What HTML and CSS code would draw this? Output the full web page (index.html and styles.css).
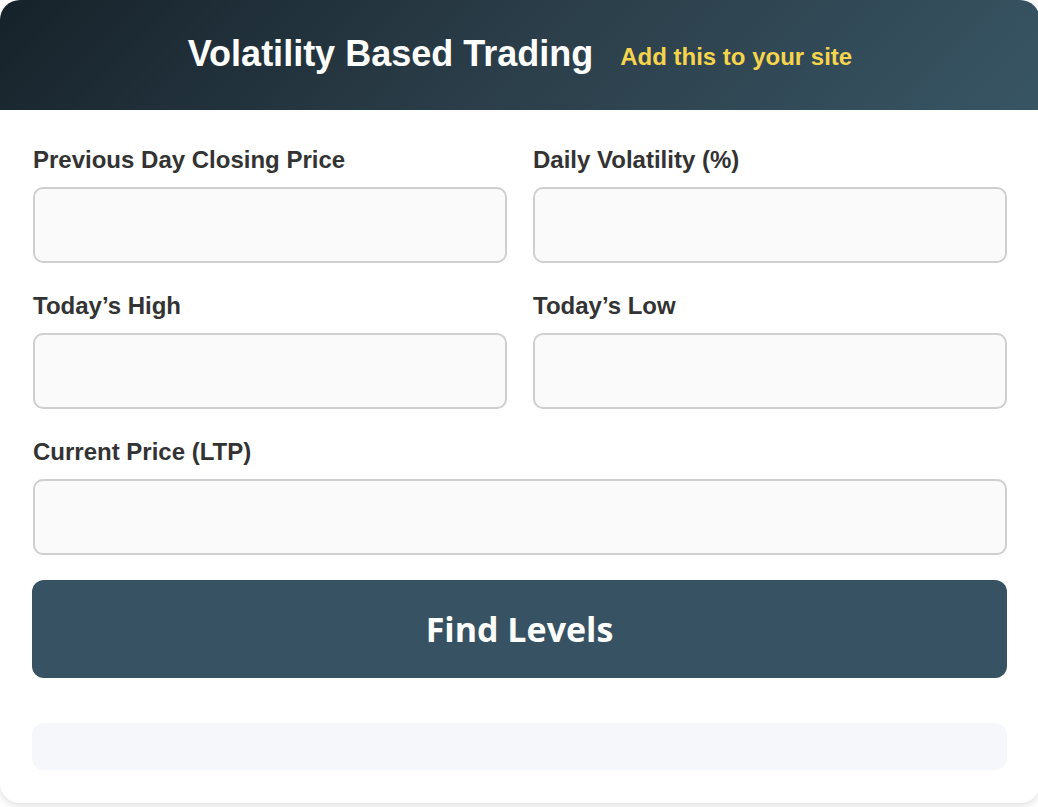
FILE: index.html
```html
<!DOCTYPE html>
<html lang="en">
<head>
<meta charset="utf-8">
<title>Volatility Based Trading</title>
<link rel="stylesheet" href="styles.css">
</head>
<body>
<div class="card">
  <header class="card-head">
    <h1 class="title">Volatility Based Trading</h1>
    <a class="embed-link" href="#">Add this to your site</a>
  </header>
  <div class="card-body">
    <div class="grid">
      <div class="field">
        <label class="label">Previous Day Closing Price</label>
        <input class="input" type="text">
      </div>
      <div class="field">
        <label class="label">Daily Volatility (%)</label>
        <input class="input" type="text">
      </div>
      <div class="field">
        <label class="label">Today’s High</label>
        <input class="input" type="text">
      </div>
      <div class="field">
        <label class="label">Today’s Low</label>
        <input class="input" type="text">
      </div>
      <div class="field full">
        <label class="label">Current Price (LTP)</label>
        <input class="input" type="text">
      </div>
    </div>
    <button class="btn" type="button">Find Levels</button>
    <div class="result"></div>
  </div>
</div>
</body>
</html>
```

FILE: styles.css
```css
* { box-sizing: border-box; }
html, body { margin: 0; padding: 0; }
body {
  background: #ffffff;
  font-family: "Liberation Sans", Arial, sans-serif;
  width: 1038px;
  height: 807px;
  overflow: hidden;
}
.card {
  width: 1040px;
  height: 803px;
  background: #ffffff;
  border-radius: 20px;
  box-shadow: 0 3px 8px rgba(0, 0, 0, 0.12);
  overflow: hidden;
}
.card-head {
  height: 110px;
  background: linear-gradient(135deg, #16222a 0%, #2b3e49 50%, #385564 100%);
  display: flex;
  align-items: center;
  justify-content: center;
  gap: 27px;
  padding-bottom: 2px;
}
.title {
  margin: 0;
  color: #ffffff;
  font-size: 36px;
  font-weight: 700;
  line-height: 1;
}
.embed-link {
  color: #f6d44c;
  font-size: 24px;
  font-weight: 700;
  text-decoration: none;
  padding-top: 5px;
}
.card-body {
  padding: 36px 32px 33px 33px;
}
.grid {
  display: grid;
  grid-template-columns: 474px 474px;
  column-gap: 26px;
  row-gap: 29px;
}
.field { display: flex; flex-direction: column; }
.field.full { grid-column: 1 / span 2; }
.label {
  font-size: 24px;
  font-weight: 700;
  color: #333333;
  line-height: 28px;
  margin-bottom: 13px;
}
.input {
  height: 76px;
  border: 2px solid #cfcfcf;
  border-radius: 10px;
  background: #fafafa;
  font-size: 20px;
  padding: 0 14px;
  outline: none;
}
.btn {
  display: block;
  width: 975px;
  height: 98px;
  margin-top: 25px;
  margin-left: -1px;
  border: none;
  border-radius: 12px;
  background: #375262;
  color: #ffffff;
  font-family: "Open Sans", "Noto Sans", sans-serif;
  font-size: 34px;
  font-weight: 700;
  cursor: pointer;
}
.result {
  width: 975px;
  height: 47px;
  margin-top: 45px;
  margin-left: -1px;
  border-radius: 12px;
  background: #f5f7fa;
}
```
